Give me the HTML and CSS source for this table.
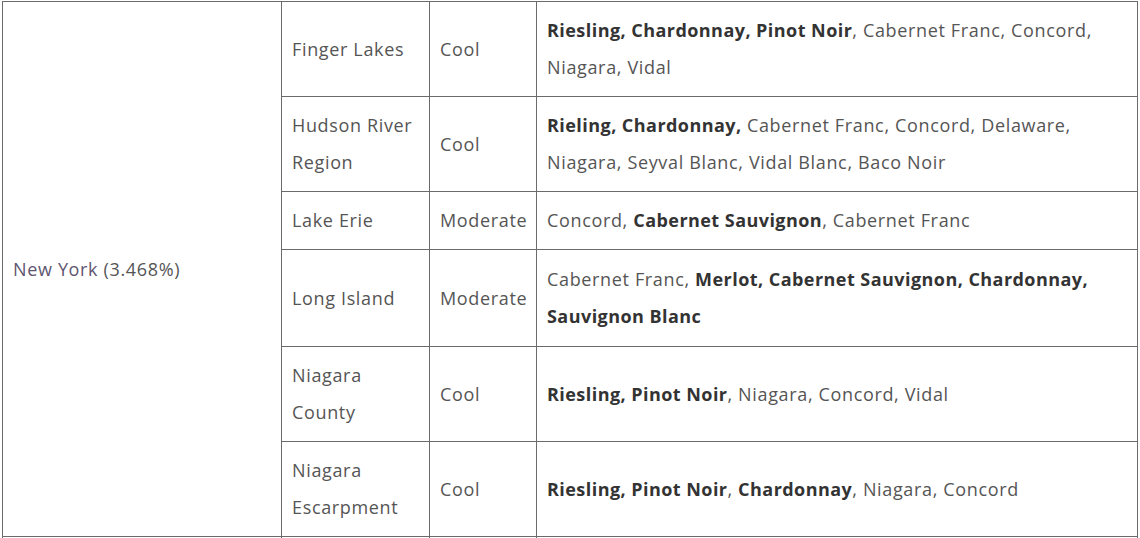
FILE: index.html
```html
<!DOCTYPE html>
<html>
<head>
<meta charset="utf-8">
<link rel="stylesheet" href="styles.css">
</head>
<body>
<table class="wine">
  <colgroup>
    <col class="c-state">
    <col class="c-region">
    <col class="c-climate">
    <col class="c-grapes">
  </colgroup>
  <tbody>
    <tr>
      <td rowspan="6" class="state"><a class="link">New York</a> (3.468%)</td>
      <td>Finger Lakes</td>
      <td>Cool</td>
      <td><b>Riesling, Chardonnay, Pinot Noir</b>, Cabernet Franc, Concord, Niagara, Vidal</td>
    </tr>
    <tr>
      <td>Hudson River Region</td>
      <td>Cool</td>
      <td><b>Rieling, Chardonnay,</b> Cabernet Franc, Concord, Delaware, Niagara, Seyval Blanc, Vidal Blanc, Baco Noir</td>
    </tr>
    <tr>
      <td>Lake Erie</td>
      <td>Moderate</td>
      <td>Concord, <b>Cabernet Sauvignon</b>, Cabernet Franc</td>
    </tr>
    <tr class="tall">
      <td>Long Island</td>
      <td>Moderate</td>
      <td>Cabernet Franc, <b>Merlot, Cabernet Sauvignon, Chardonnay, Sauvignon Blanc</b></td>
    </tr>
    <tr>
      <td>Niagara County</td>
      <td>Cool</td>
      <td><b>Riesling, Pinot Noir</b>, Niagara, Concord, Vidal</td>
    </tr>
    <tr>
      <td>Niagara Escarpment</td>
      <td>Cool</td>
      <td><b>Riesling, Pinot Noir</b>, <b>Chardonnay</b>, Niagara, Concord</td>
    </tr>
    <tr>
      <td>&nbsp;</td>
      <td>&nbsp;</td>
      <td>&nbsp;</td>
      <td>&nbsp;</td>
    </tr>
  </tbody>
</table>
</body>
</html>
```

FILE: styles.css
```css
html, body {
  margin: 0;
  padding: 0;
  background: #ffffff;
}

html {
  height: 538px;
  overflow: hidden;
}

body {
  font-family: "Open Sans", "Noto Sans", sans-serif;
  font-size: 18px;
  line-height: 37px;
  letter-spacing: 0.65px;
  color: #555555;
  padding-left: 2px;
  padding-top: 1px;
}

.wine {
  border-collapse: collapse;
  table-layout: fixed;
  width: 1135px;
}

.c-state { width: 279px; }
.c-region { width: 148px; }
.c-climate { width: 107px; }
.c-grapes { width: 601px; }

.wine td {
  border: 1px solid #6b6b6b;
  padding: 10px 8px 10px 10px;
  vertical-align: middle;
  text-align: left;
}

.wine .tall td {
  padding-top: 11px;
  padding-bottom: 11px;
}

.wine .tall td.state {
  padding: 10px 8px 10px 12px;
}

.wine b {
  font-weight: 700;
  letter-spacing: 0.45px;
  color: #333333;
}

.state {
  padding-left: 12px;
}

.link {
  color: #5e5570;
  text-decoration: none;
}
```
